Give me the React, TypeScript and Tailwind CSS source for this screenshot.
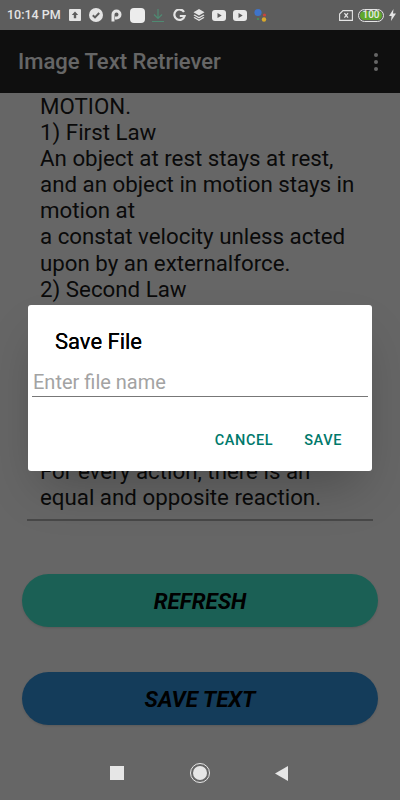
const font = { fontFamily: "Roboto, sans-serif" };

const lines = [
  "MOTION.",
  "1) First Law",
  "An object at rest stays at rest,",
  "and an object in motion stays in",
  "motion at",
  "a constat velocity unless acted",
  "upon by an externalforce.",
  "2) Second Law",
  "",
  "",
  "",
  "",
  "",
  "",
  "For every action, there is an",
  "equal and opposite reaction.",
];

const StatusIcons = () => (
  <div className="flex items-center gap-[7px] ml-[8px]">
    {/* upload box */}
    <svg width="12" height="12" viewBox="0 0 12 12">
      <rect width="12" height="12" rx="1" fill="#e4e4e4" />
      <path d="M6 2.5 9.2 6H7.2v3.2H4.8V6H2.8z" fill="#5c5c5c" />
    </svg>
    {/* check */}
    <svg width="14" height="14" viewBox="0 0 14 14" className="ml-[1px]">
      <circle cx="7" cy="7" r="7" fill="#e4e4e4" />
      <path d="M3.8 7.2 6 9.4l4.2-4.4" fill="none" stroke="#5c5c5c" strokeWidth="2" />
    </svg>
    {/* P */}
    <svg width="11" height="13" viewBox="0 0 11 13" className="ml-[1px]">
      <path d="M2 12.5V5.5a3.5 3.5 0 1 1 3.5 3.5H4" fill="none" stroke="#e4e4e4" strokeWidth="3" />
    </svg>
    <div className="w-[15px] h-[15px] rounded-[4px] bg-[#ececec] ml-[1px]" />
    {/* download */}
    <svg width="12" height="13" viewBox="0 0 12 13">
      <path d="M6 0v9M2 5.5 6 9.5l4-4M0 12.5h12" fill="none" stroke="#4f8a72" strokeWidth="1.2" />
    </svg>
    {/* G */}
    <svg width="13" height="13" viewBox="0 0 13 13" className="ml-[2px]">
      <path d="M11 3A5.2 5.2 0 1 0 11.6 7H6.8" fill="none" stroke="#e4e4e4" strokeWidth="2.2" />
    </svg>
    {/* layers */}
    <svg width="12" height="12" viewBox="0 0 12 12">
      <path d="M6 0 11.5 3.3 6 6.6.5 3.3zM1.6 5.4 6 8.1l4.4-2.7 1.1.8L6 9.6.5 6.2zM1.6 8 6 10.6 10.4 8l1.1.8L6 12 .5 8.8z" fill="#e4e4e4" />
    </svg>
    {[0, 1].map((i) => (
      <svg key={i} width="14" height="11" viewBox="0 0 14 11">
        <rect width="14" height="11" rx="3" fill="#e8e8e8" />
        <path d="M5.5 3v5l4.2-2.5z" fill="#5c5c5c" />
      </svg>
    ))}
    {/* assistant dots */}
    <svg width="14" height="14" viewBox="0 0 14 14">
      <circle cx="4" cy="4.5" r="3.6" fill="#3f74c9" />
      <circle cx="10.5" cy="7" r="1.6" fill="#c9443c" />
      <circle cx="10" cy="11.5" r="2.2" fill="#d9a92c" />
      <circle cx="4" cy="11" r="1" fill="#3f9a5c" />
    </svg>
  </div>
);

const StatusRight = () => (
  <div className="flex items-center ml-auto mr-[4px]">
    <svg width="14" height="11" viewBox="0 0 14 11">
      <path d="M4 .6h9.4v9.8H.6V4z" fill="none" stroke="#e4e4e4" strokeWidth="1.1" />
      <path d="M5.4 3.2l3.6 4.4M9 3.2 5.4 7.6" stroke="#e4e4e4" strokeWidth="1.3" />
    </svg>
    <div className="ml-[5px] w-[26px] h-[13px] rounded-full border border-[#e4e4e4] p-[1px]">
      <div className="h-full rounded-full bg-[#5fa82c] flex items-center justify-center text-[10px] leading-none font-medium text-[#e8e8e8]">
        100
      </div>
    </div>
    <svg width="7" height="12" viewBox="0 0 7 12" className="ml-[5px]">
      <path d="M4.5 0 0 7h2.6L2 12l5-7.4H4z" fill="#e4e4e4" />
    </svg>
  </div>
);

export default function App() {
  return (
    <div className="w-[400px] h-[800px] flex flex-col overflow-hidden bg-[#666666]" style={font}>
      <div className="h-[30px] shrink-0 flex items-center pl-[7px] bg-[#5d5d5d]">
        <span className="text-[12.5px] font-medium text-[#e4e4e4]">10:14 PM</span>
        <StatusIcons />
        <StatusRight />
      </div>

      <div className="relative flex-1 flex flex-col bg-white">
        <div className="h-[63px] shrink-0 flex items-center justify-between pl-[18px] pr-[22px] bg-[#262626]">
          <span className="text-[22px] font-medium text-white">Image Text Retriever</span>
          <div className="flex flex-col gap-[3px]">
            <div className="w-[4px] h-[4px] rounded-full bg-white" />
            <div className="w-[4px] h-[4px] rounded-full bg-white" />
            <div className="w-[4px] h-[4px] rounded-full bg-white" />
          </div>
        </div>

        <div className="mx-[27px] h-[428px] pl-[13px] border-b-2 border-[#b4b4b4] text-[22.3px] leading-[26.1px] text-[#1a1a1a] whitespace-nowrap overflow-hidden">
          {lines.map((l, i) => (
            <div key={i} className="h-[26.1px]">{l}</div>
          ))}
        </div>

        <div className="flex flex-col gap-[45px] mt-[53px] mx-[22px]">
          <button className="h-[53px] pt-[3px] rounded-full bg-[#45f0d4] text-[22.3px] font-bold italic text-black shadow-sm">
            REFRESH
          </button>
          <button className="h-[53px] pt-[3px] rounded-full bg-[#3496e2] text-[22.3px] font-bold italic text-black shadow-sm">
            SAVE TEXT
          </button>
        </div>

        {/* dim layer with dialog */}
        <div className="absolute inset-0 bg-black/60 px-[28px] pt-[275px]">
          <div className="h-[166px] rounded-[3px] bg-white shadow-2xl px-[4px]">
            <div className="pl-[23px] pt-[23px] text-[22px] leading-[28px] text-black [text-shadow:0_0_0.4px_black]">Save File</div>
            <div className="mt-[13px] h-[28px] border-b border-[#777777] text-[20px] leading-[26px] text-[#a3a3a3]">
              <span className="pl-[1px]">Enter file name</span>
            </div>
            <div className="flex justify-end gap-[31px] pr-[26px] pt-[34px] text-[14.5px] leading-[20px] font-medium tracking-[0.6px] text-[#00796b]">
              <span>CANCEL</span>
              <span>SAVE</span>
            </div>
          </div>
        </div>
      </div>

      <div className="h-[63px] shrink-0 flex items-center bg-[#666666] pl-[110px] pt-[9px]">
        <div className="w-[14px] h-[14px] bg-[#e6e6e6]" />
        <div className="ml-[66px] w-[20px] h-[20px] rounded-full border border-[#e6e6e6] p-[2px]">
          <div className="w-full h-full rounded-full bg-[#e6e6e6]" />
        </div>
        <svg width="13" height="15" viewBox="0 0 13 15" className="ml-[65px]">
          <path d="M13 0v15L0 7.5z" fill="#e6e6e6" />
        </svg>
      </div>
    </div>
  );
}
